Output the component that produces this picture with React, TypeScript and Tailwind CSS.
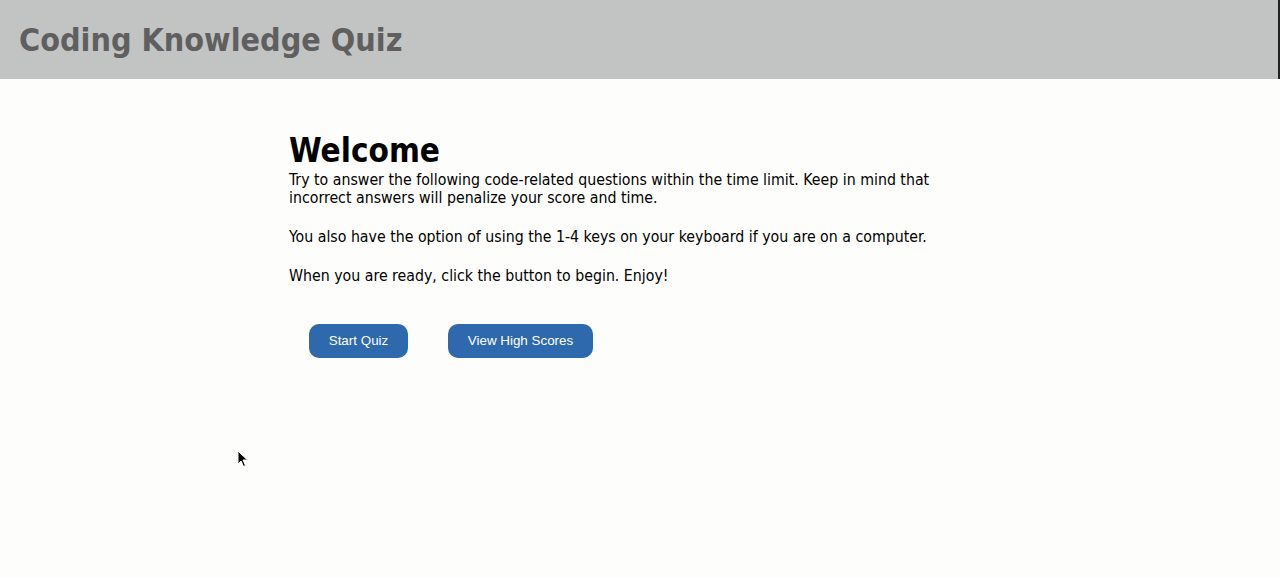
export default function App() {
  return (
    <div className="min-h-[578px] bg-[#fdfdfb] font-['DejaVu_Sans_Condensed','DejaVu_Sans',sans-serif] text-black relative">
      {/* Header */}
      <header className="h-[79px] bg-[#c2c4c4] border-r-2 border-[#222] flex items-center px-[19px]">
        <h1 className="text-[32px] font-bold text-[#5f5f5f] leading-none">Coding Knowledge Quiz</h1>
      </header>

      {/* Welcome */}
      <main className="w-[650px] ml-[289px] pt-[52px]">
        <h2 className="text-[33px] font-bold leading-[40px]">Welcome</h2>
        <p className="text-[15.75px] leading-[18px]">
          Try to answer the following code-related questions within the time limit. Keep in mind that incorrect answers will penalize your score and time.
        </p>
        <p className="text-[15.75px] leading-[18px] mt-[21px]">
          You also have the option of using the 1-4 keys on your keyboard if you are on a computer.
        </p>
        <p className="text-[15.75px] leading-[18px] mt-[21px]">
          When you are ready, click the button to begin. Enjoy!
        </p>

        <div className="flex gap-[40px] ml-[20px] mt-[39px] font-['Liberation_Sans',sans-serif]">
          <button className="w-[99px] h-[34px] rounded-[10px] bg-[#2e68ad] text-white text-[13.4px]">Start Quiz</button>
          <button className="w-[145px] h-[34px] rounded-[10px] bg-[#2e68ad] text-white text-[13.4px]">View High Scores</button>
        </div>
      </main>

      {/* mouse cursor */}
      <svg className="absolute left-[237px] top-[450px]" width="12" height="18" viewBox="0 0 12 18">
        <path d="M1 1 L1 14 L4 11 L6.5 16.5 L8.5 15.5 L6 10 L10.5 10 Z" fill="#000" stroke="#fff" strokeWidth="1" />
      </svg>
    </div>
  );
}
